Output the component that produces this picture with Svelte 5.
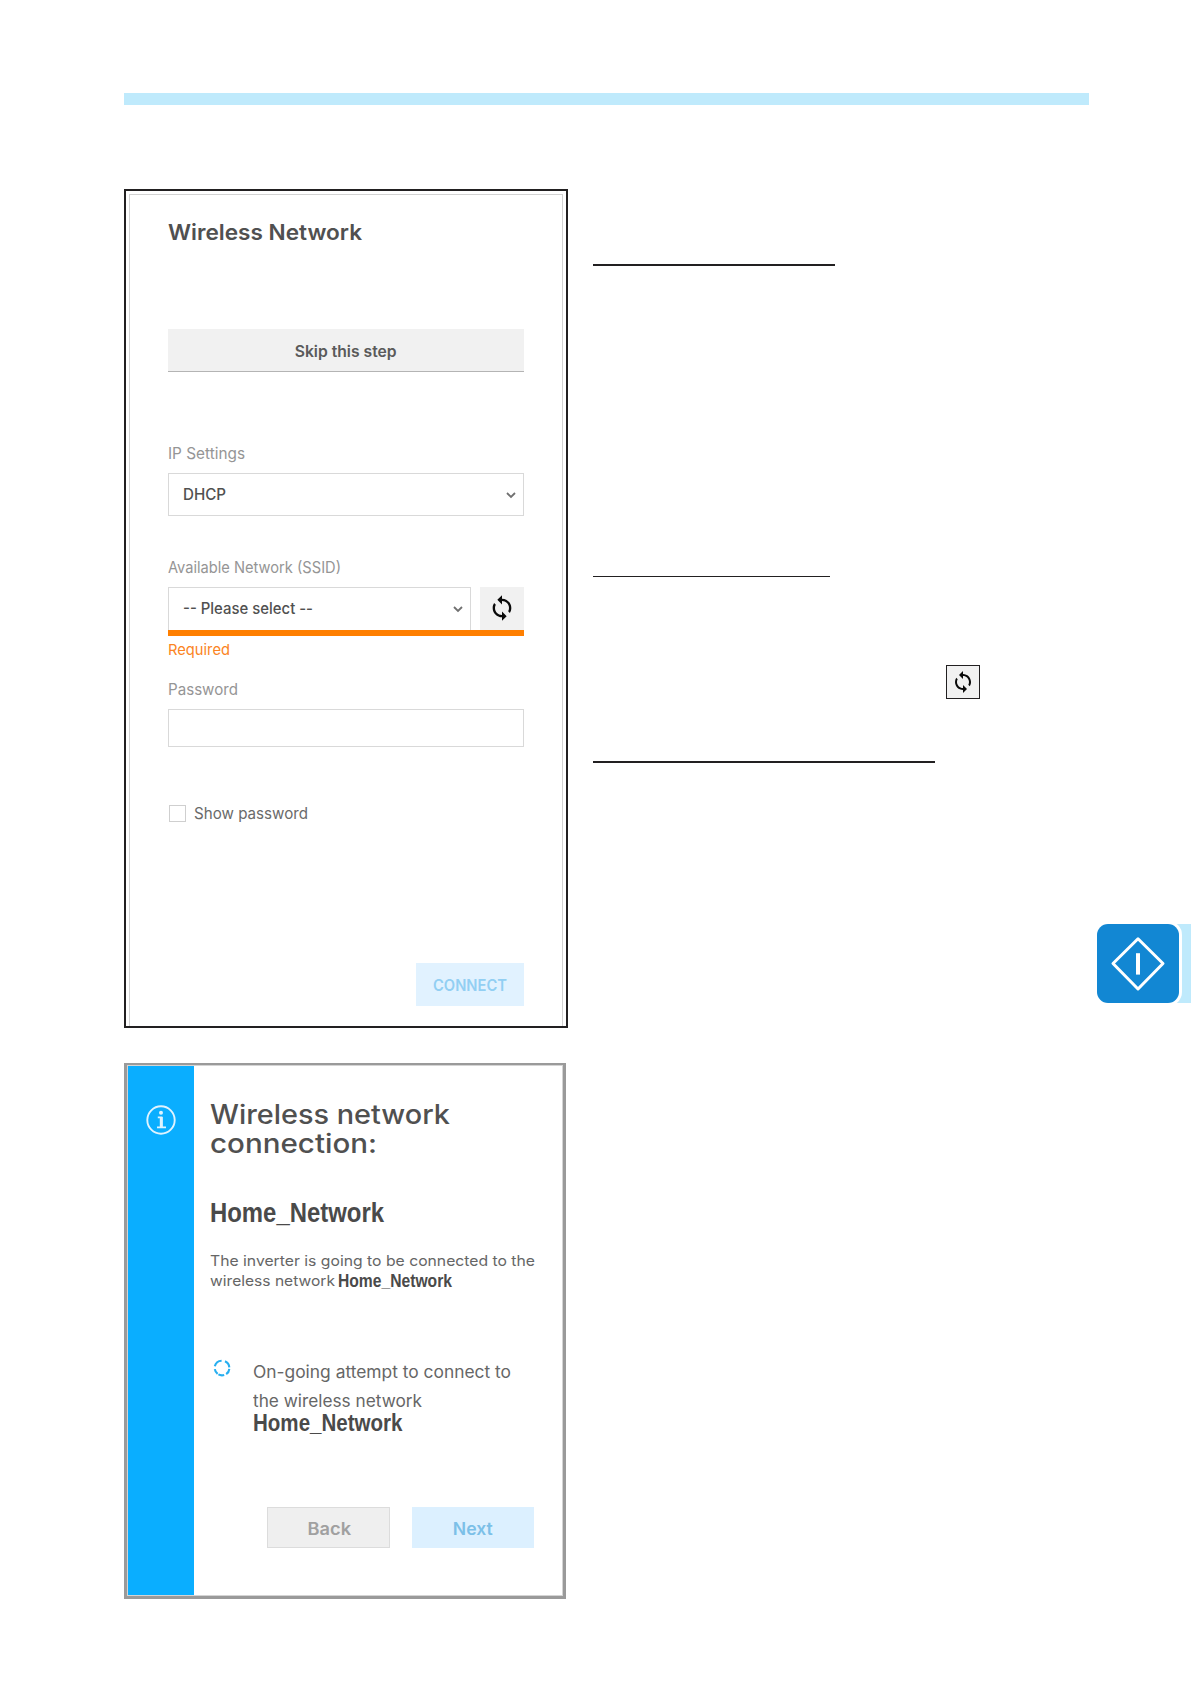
<script>
    let showPassword = $state(false);
    let password = $state('');
    let ssid = 'Home_Network';

    // Scale the text horizontally so that the line takes the given width
    const fit = (node, width) => {
        const natural = node.getBoundingClientRect().width;
        node.style.width = width + 'px';
        node.style.transform = `scaleX(${width / natural})`;
    };
</script>

{#snippet refreshIcon(size)}
    <svg width={size} height={size} viewBox="0 0 24 24">
        <path fill="#0a0a0a" d="M12 4V1L8 5l4 4V6c3.31 0 6 2.69 6 6 0 1.01-.25 1.97-.7 2.8l1.46 1.46C19.54 15.03 20 13.57 20 12c0-4.42-3.58-8-8-8zm0 14c-3.31 0-6-2.69-6-6 0-1.01.25-1.97.7-2.8L5.24 7.74C4.46 8.97 4 10.43 4 12c0 4.42 3.58 8 8 8v3l4-4-4-4v3z" />
    </svg>
{/snippet}

{#snippet chevron()}
    <svg class="chevron" width="10" height="7" viewBox="0 0 10 7">
        <path d="M1 1l4 4 4-4" fill="none" stroke="#707070" stroke-width="1.8" />
    </svg>
{/snippet}

<div class="page">
    <div class="top-bar"></div>

    <div class="columns">
        <div class="left">
            <section class="wireless">
                <div class="wireless-inner">
                    <h2><span use:fit={194}>Wireless Network</span></h2>

                    <button class="skip"><span use:fit={102}>Skip this step</span></button>

                    <div class="label ip"><span use:fit={77}>IP Settings</span></div>
                    <button class="select">
                        <span use:fit={43}>DHCP</span>
                        {@render chevron()}
                    </button>

                    <div class="label network"><span use:fit={173}>Available Network (SSID)</span></div>
                    <div class="network-row">
                        <button class="select">
                            <span use:fit={130}>-- Please select --</span>
                            {@render chevron()}
                        </button>
                        <button class="refresh" aria-label="Refresh">{@render refreshIcon(28)}</button>
                    </div>
                    <div class="required"><span use:fit={62}>Required</span></div>

                    <div class="label password"><span use:fit={70}>Password</span></div>
                    <input class="password-input" type={showPassword ? 'text' : 'password'} bind:value={password}>

                    <label class="show">
                        <input type="checkbox" bind:checked={showPassword}>
                        <span use:fit={114}>Show password</span>
                    </label>

                    <button class="connect"><span use:fit={74}>CONNECT</span></button>
                </div>
            </section>

            <section class="connection">
                <div class="stripe">
                    <svg width="30" height="30" viewBox="0 0 30 30" fill="none" stroke="#dff3ff">
                        <circle cx="15" cy="15" r="13.7" stroke-width="1.9" />
                        <circle cx="15" cy="7.7" r="2" fill="#dff3ff" stroke="none" />
                        <path d="M11.8 12.4h3.7v9.4M11 22.3h9" stroke-width="1.8" />
                        <path d="M15.3 12v10" stroke-width="3" />
                    </svg>
                </div>
                <div class="body">
                    <h1>
                        <span use:fit={240}>Wireless network</span><br>
                        <span use:fit={167}>connection:</span>
                    </h1>
                    <div class="ssid big"><span use:fit={174}>{ssid}</span></div>

                    <div class="text">
                        <div><span use:fit={325}>The inverter is going to be connected to the</span></div>
                        <div class="text-row">
                            <span use:fit={125}>wireless network</span>
                            <span class="ssid small" use:fit={114}>{ssid}</span>
                        </div>
                    </div>

                    <div class="attempt">
                        <svg width="18" height="18" viewBox="0 0 18 18" fill="none" stroke="#27aff0" stroke-width="2.1">
                            <path d="M1.8 7.2A7.3 7.3 0 0 1 8.6 1.7" />
                            <path d="M12 2.2A7.3 7.3 0 0 1 16.3 8.4" />
                            <path d="M16.3 9.8A7.3 7.3 0 0 1 13.2 15.2" />
                            <path d="M11.2 16A7.3 7.3 0 0 1 5.4 15.4" />
                            <path d="M4.6 14.9A7.3 7.3 0 0 1 1.8 10.2" />
                        </svg>
                        <div>
                            <div class="line"><span use:fit={258}>On-going attempt to connect to</span></div>
                            <div class="line"><span use:fit={169}>the wireless network</span></div>
                            <div class="ssid medium"><span use:fit={149.5}>{ssid}</span></div>
                        </div>
                    </div>

                    <div class="actions">
                        <button class="back"><span use:fit={43.5}>Back</span></button>
                        <button class="next"><span use:fit={40}>Next</span></button>
                    </div>
                </div>
            </section>
        </div>

        <div class="right">
            <hr class="first">
            <hr class="second">
            <div class="refresh-box">{@render refreshIcon(24)}</div>
            <hr class="third">
        </div>
    </div>

    <div class="side-tab">
        <div class="badge">
            <svg width="82" height="79" viewBox="0 0 82 79" fill="none" stroke="#fff">
                <path d="M41 14.8L66 39.5 41 65 16 39.5z" stroke-width="3" stroke-linejoin="round" />
                <path d="M41 29.2v21.4" stroke-width="4" />
            </svg>
        </div>
    </div>
</div>

<style>
    :global(body) {
        background: #fff;
    }

    .page {
        position: relative;
        box-sizing: border-box;
        width: 1191px;
        height: 1684px;
        padding: 93px 102px 0 124px;
        overflow: hidden;
        font-family: Inter, "Liberation Sans", sans-serif;
        font-size: 15.5px;
        line-height: 20px;
        color: #505050;
    }

    .page * {
        box-sizing: border-box;
    }

    span {
        display: inline-block;
        white-space: pre;
        transform-origin: left;
    }

    h1, h2 {
        margin: 0;
        font-weight: 500;
    }

    svg {
        display: block;
    }

    button {
        display: flex;
        align-items: center;
        justify-content: center;
        padding: 0;
        border: none;
        font: inherit;
        color: inherit;
        cursor: pointer;
    }

    .top-bar {
        height: 12px;
        background: #bfeafc;
    }

    .columns {
        display: grid;
        grid-template-columns: 444px 1fr;
        column-gap: 25px;
        margin-top: 84px;
    }

    /* Wireless form */
    .wireless {
        height: 839px;
        padding: 3px 3px 0;
        border: 2px solid #222021;
    }

    .wireless-inner {
        height: 832px;
        padding: 23px 38px 0;
        border: 1px solid #d2d2d2;
        border-bottom: none;
    }

    h2 {
        font-size: 21.5px;
        line-height: 28px;
        font-weight: 600;
    }

    .skip {
        width: 100%;
        height: 43px;
        margin-top: 83px;
        padding: 3px 2px 0 0;
        background: #f1f1f1;
        border-bottom: 1px solid #b4b4b4;
        font-weight: 600;
        color: #5a5a5a;
    }

    .label {
        margin-bottom: 9px;
        color: #959595;
    }

    .ip {
        margin-top: 72px;
    }

    .network {
        margin-top: 42px;
    }

    .password {
        margin-top: 20px;
    }

    .select {
        width: 100%;
        height: 43px;
        padding: 1px 7px 0 14px;
        justify-content: space-between;
        background: #fff;
        border: 1px solid #d9d9d9;
        font-weight: 550;
    }

    .network-row {
        display: flex;
        gap: 9px;
        border-bottom: 6px solid #ff7f00;
    }

    .network-row .select {
        padding-top: 0;
        border-bottom: none;
    }

    .refresh {
        flex: 0 0 44px;
        height: 43px;
        padding-bottom: 1px;
        background: #f1f1f1;
    }

    .required {
        margin-top: 4px;
        font-size: 15px;
        color: #fb8423;
    }

    .password-input {
        display: block;
        width: 100%;
        height: 38px;
        border: 1px solid #d9d9d9;
    }

    .show {
        display: flex;
        align-items: center;
        gap: 8px;
        height: 20px;
        margin-top: 57px;
        padding-left: 1px;
        color: #6a6a6a;
    }

    .show input {
        appearance: none;
        width: 17px;
        height: 17px;
        margin: 0 0 2px;
        border: 1px solid #cfcfcf;
    }

    .connect {
        width: 108px;
        height: 43px;
        margin: 139px 0 0 auto;
        padding-top: 2px;
        background: #e1f2ff;
        color: #92cff3;
        font-weight: 600;
    }

    /* Connection dialog */
    .connection {
        display: flex;
        width: 442px;
        height: 536px;
        margin-top: 35px;
        padding: 1px;
        border: solid #9a9a9a;
        border-width: 2px 3px 3px 3px;
        box-shadow: inset 0 0 0 1px #d4d4d4;
    }

    .stripe {
        flex: 0 0 66px;
        padding: 39px 0 0 18px;
        background: #0aaeff;
    }

    .body {
        flex: 1;
        min-width: 0;
        padding: 34px 28px 0 16px;
    }

    h1 {
        font-size: 26.5px;
        line-height: 29px;
    }

    .ssid {
        font-family: "Liberation Sans", Arial, sans-serif;
        font-weight: bold;
        color: #4a4a4a;
    }

    .big {
        margin-top: 39px;
        font-size: 28px;
        line-height: 32px;
    }

    .text {
        margin-top: 22px;
        font-size: 14.7px;
        line-height: 20px;
        color: #666;
    }

    .text-row {
        display: flex;
        gap: 3px;
        height: 21px;
    }

    .small {
        font-size: 18px;
    }

    .attempt {
        display: flex;
        gap: 22px;
        margin-top: 66px;
        padding-left: 3px;
    }

    .attempt svg {
        flex: none;
        margin-top: 1px;
    }

    .line {
        height: 28.5px;
        font-size: 17px;
        line-height: 28.5px;
        color: #666;
    }

    .medium {
        height: 24px;
        margin-top: -4px;
        font-size: 23.5px;
        line-height: 24px;
    }

    .actions {
        display: flex;
        justify-content: flex-end;
        gap: 22px;
        margin-top: 72px;
    }

    .back, .next {
        height: 41px;
        padding: 2px 2px 0 0;
        font-size: 17px;
        font-weight: 600;
    }

    .back {
        width: 123px;
        background: #efefef;
        border: 1px solid #dcdcdc;
        color: #a0a0a0;
    }

    .next {
        width: 122px;
        background: #dcf0ff;
        color: #7cc0e8;
    }

    /* Right column */
    hr {
        height: 2px;
        margin: 0;
        border: none;
        background: #222021;
    }

    .first {
        width: 242px;
        margin-top: 75px;
    }

    .second {
        width: 237px;
        height: 1px;
        margin-top: 310px;
    }

    .refresh-box {
        display: flex;
        align-items: center;
        justify-content: center;
        width: 34px;
        height: 34px;
        margin: 88px 0 0 353px;
        background: #f1f1f1;
        border: 1px solid #222021;
    }

    .third {
        width: 342px;
        margin-top: 62px;
    }

    /* Chapter marker on the page edge */
    .side-tab {
        position: absolute;
        top: 924px;
        right: 0;
        width: 94px;
        height: 79px;
        background: linear-gradient(to right, #fff 70px, #bfeafc 70px);
    }

    .badge {
        width: 82px;
        height: 79px;
        border-radius: 11px;
        background: #1287d3;
        box-shadow: 0 0 0 3px #fff;
    }
</style>
